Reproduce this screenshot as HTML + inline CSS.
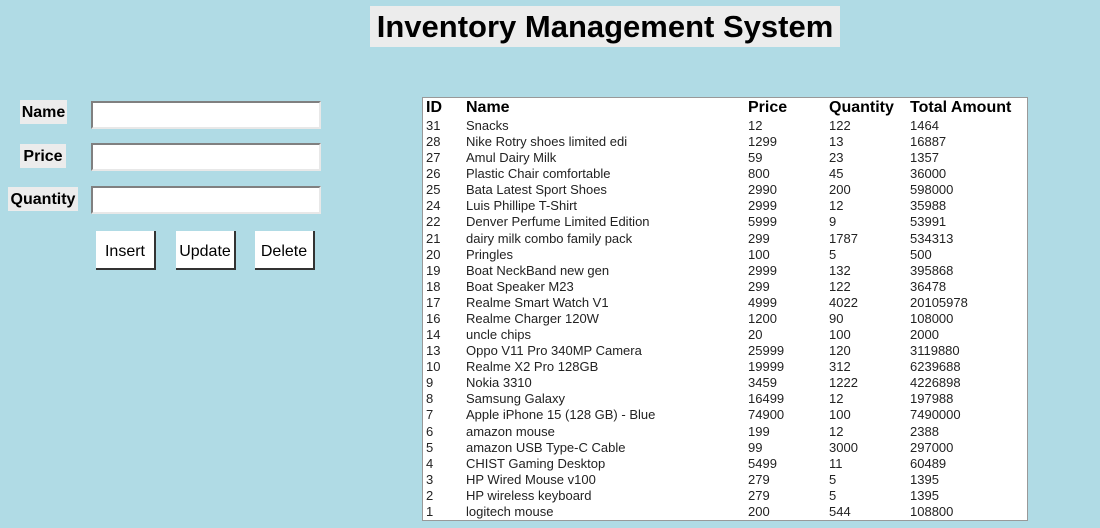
<!DOCTYPE html><html><head><style>
body{margin:0;width:1100px;height:528px;background:#b0dbe5;font-family:"Liberation Sans",sans-serif;position:relative;overflow:hidden}
.t{position:absolute;left:370px;top:6px;width:470px;height:41px;background:#ececec;font-weight:bold;font-size:31px;line-height:42px;text-align:center;color:#000}
.l{position:absolute;background:#ececec;font-weight:bold;font-size:16px;height:24px;line-height:26px;text-align:center}
.i{position:absolute;left:91px;width:226px;height:24px;background:#fff;border-top:2px solid #808080;border-left:2px solid #808080;border-right:2px solid #e8e8e8;border-bottom:2px solid #e8e8e8}
.b{position:absolute;top:231px;width:58px;height:37px;background:#fff;border-right:2px solid #333;border-bottom:2px solid #333;font-size:16px;line-height:41px;text-align:center}
.tb{position:absolute;left:422px;top:97px;width:604px;height:422px;background:#fff;border:1px solid #999}
.r{position:absolute;left:0;height:16px;font-size:13px;line-height:16px;color:#222;white-space:nowrap}
.r span{position:absolute}
.h{font-size:16px;font-weight:bold;color:#000}
</style></head><body>
<div class="t">Inventory Management System</div>
<div class="l" style="left:20px;top:100px;width:47px">Name</div>
<div class="l" style="left:20px;top:144px;width:46px">Price</div>
<div class="l" style="left:8px;top:187px;width:70px">Quantity</div>
<div class="i" style="top:101px"></div>
<div class="i" style="top:143px"></div>
<div class="i" style="top:186px"></div>
<div class="b" style="left:96px">Insert</div>
<div class="b" style="left:176px">Update</div>
<div class="b" style="left:255px">Delete</div>
<div class="tb" id="tb"></div>
<script>
var d=[["ID","Name","Price","Quantity","Total Amount"],
["31","Snacks","12","122","1464"],["28","Nike Rotry shoes limited edi","1299","13","16887"],["27","Amul Dairy Milk","59","23","1357"],["26","Plastic Chair comfortable","800","45","36000"],["25","Bata Latest Sport Shoes","2990","200","598000"],["24","Luis Phillipe T-Shirt","2999","12","35988"],["22","Denver Perfume Limited Edition","5999","9","53991"],["21","dairy milk combo family pack","299","1787","534313"],["20","Pringles","100","5","500"],["19","Boat NeckBand new gen","2999","132","395868"],["18","Boat Speaker M23","299","122","36478"],["17","Realme Smart Watch V1","4999","4022","20105978"],["16","Realme Charger 120W","1200","90","108000"],["14","uncle chips","20","100","2000"],["13","Oppo V11 Pro 340MP Camera","25999","120","3119880"],["10","Realme X2 Pro 128GB","19999","312","6239688"],["9","Nokia 3310","3459","1222","4226898"],["8","Samsung Galaxy","16499","12","197988"],["7","Apple iPhone 15 (128 GB) - Blue","74900","100","7490000"],["6","amazon mouse","199","12","2388"],["5","amazon USB Type-C Cable","99","3000","297000"],["4","CHIST Gaming Desktop","5499","11","60489"],["3","HP Wired Mouse v100","279","5","1395"],["2","HP wireless keyboard","279","5","1395"],["1","logitech mouse","200","544","108800"]];
var x=[3,43,325,406,487],h="";
d.forEach(function(r,i){var top=i==0?1:20+(i-1)*16.08;h+='<div class="r'+(i==0?' h':'')+'" style="top:'+top+'px;height:'+(i==0?18:16)+'px;line-height:'+(i==0?18:16)+'px">';r.forEach(function(c,j){h+='<span style="left:'+x[j]+'px">'+c+'</span>'});h+='</div>'});
document.getElementById('tb').innerHTML=h;
</script>
</body></html>
